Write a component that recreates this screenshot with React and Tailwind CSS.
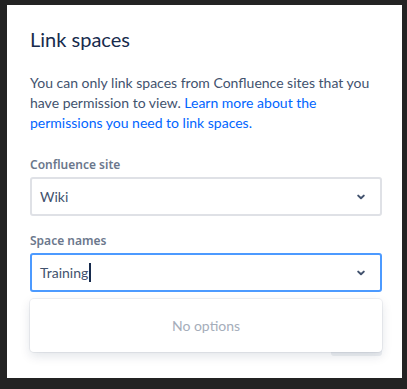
import React from "react";

function Chevron() {
  return (
    <svg width="12" height="12" viewBox="0 0 12 12" className="shrink-0">
      <path d="M3.2 4.6 L6 7.3 L8.8 4.6" fill="none" stroke="#42526E" strokeWidth="2" strokeLinecap="round" strokeLinejoin="round" />
    </svg>
  );
}

export default function App() {
  return (
    <div
      className="w-[407px] h-[389px] bg-[#232323] pt-[5px] pl-[7px] pr-[5px] pb-[11px] flex"
      style={{ fontFamily: 'Lato, "Noto Sans", sans-serif' }}
    >
      <div className="flex-1 bg-white flex flex-col pl-[23px] pr-[20px] pt-[22px] pb-[22px]">
        <h1 className="text-[20px] leading-[24px] text-[#172B4D] font-normal">Link spaces</h1>
        <p className="mt-[22px] text-[14px] leading-[20px] text-[#42526E]">
          You can only link spaces from Confluence sites that you have permission to view.{" "}
          <span className="text-[#0065FF]">Learn more about the permissions you need to link spaces.</span>
        </p>
        <label className="mt-[24px] text-[12px] leading-[16px] font-semibold text-[#6B778C]" style={{ fontFamily: '"Noto Sans", sans-serif' }}>Confluence site</label>
        <div className="mt-[4px] h-[39px] border-2 border-[#DFE1E6] rounded-[3px] bg-white flex items-center pl-[8px] pr-[13px]">
          <span className="flex-1 text-[14px] text-[#42526E]">Wiki</span>
          <Chevron />
        </div>
        <label className="mt-[17px] text-[12px] leading-[16px] font-semibold text-[#6B778C]" style={{ fontFamily: '"Noto Sans", sans-serif' }}>Space names</label>
        <div className="relative mt-[4px]">
          <div className="h-[39px] border-2 border-[#4C9AFF] rounded-[3px] bg-white flex items-center pl-[8px] pr-[13px]">
            <span className="text-[14px] text-[#42526E]">Training</span>
            <span className="w-[1.5px] h-[19px] bg-[#172B4D] ml-[1px]" />
            <span className="flex-1" />
            <Chevron />
          </div>
          <div className="absolute left-0 right-0 top-[46px] h-[53px] z-10 bg-white rounded-[4px] shadow-[0_0_0_1px_rgba(9,30,66,0.06),0_4px_11px_rgba(9,30,66,0.12)] flex items-center justify-center">
            <span className="text-[14px] text-[#A5ADBA]">No options</span>
          </div>
        </div>
        <div className="mt-auto flex justify-end">
          <div className="w-[51px] h-[32px] rounded-[3px] bg-[#EEF0F3]" />
        </div>
      </div>
    </div>
  );
}
